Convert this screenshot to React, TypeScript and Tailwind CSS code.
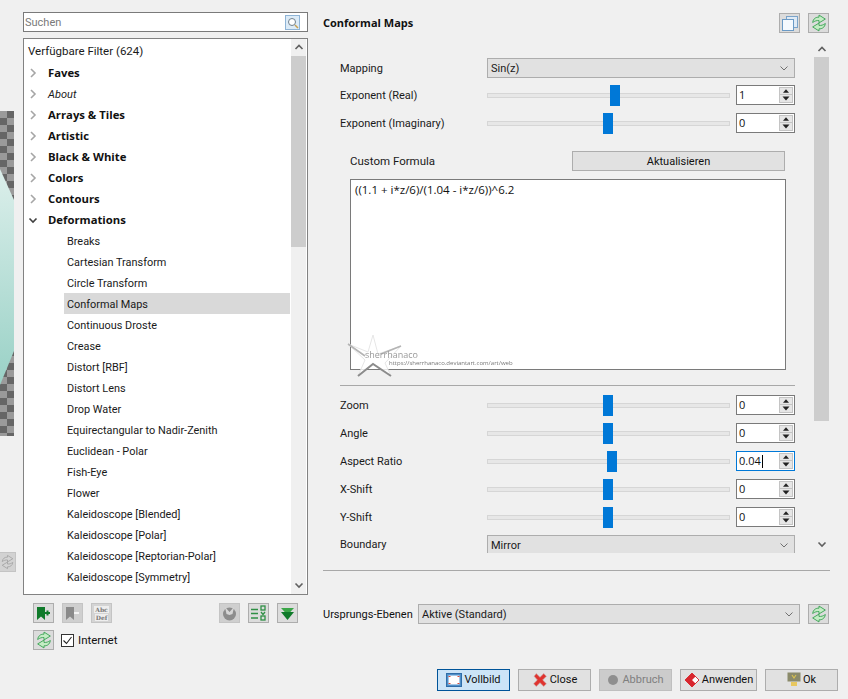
import React from "react";

function Refresh({ disabled = false }: { disabled?: boolean }) {
  const stroke = disabled ? "#a0a0a0" : "#3fa457";
  const fill = disabled ? "#d4d4d4" : "#c4ecc4";
  return (
    <svg width="18" height="18" viewBox="0 0 17 17">
      <path d="M2.5 8C3 4.4 5.6 2.8 8.5 3V1L14.5 4.8 8.5 8.4V6.2C6.3 6 4.6 6.6 2.5 8Z" fill={fill} stroke={stroke} strokeWidth="0.9" />
      <path d="M14.5 9C14 12.6 11.4 14.2 8.5 14V16L2.5 12.2 8.5 8.6V10.8C10.7 11 12.4 10.4 14.5 9Z" fill={fill} stroke={stroke} strokeWidth="0.9" />
    </svg>
  );
}

function IconBox({ children }: { children: React.ReactNode }) {
  return (
    <div className="flex h-[20px] w-[21px] shrink-0 items-center justify-center border border-[#adadad] bg-[#dcdcdc]">
      {children}
    </div>
  );
}

function Chev({ dir, color = "#606060", weight = 1.6 }: { dir: "up" | "down" | "right"; color?: string; weight?: number }) {
  const d = dir === "up" ? "M1.5 6L5 2.5 8.5 6" : dir === "down" ? "M1.5 3.5L5 7 8.5 3.5" : "M3 1L7 5 3 9";
  return (
    <svg width="10" height="10" viewBox="0 0 10 10">
      <path d={d} fill="none" stroke={color} strokeWidth={weight} />
    </svg>
  );
}

function Scrollbar({ thumbTop, thumbHeight }: { thumbTop: number; thumbHeight: number }) {
  return (
    <div className="relative h-full w-[15px] shrink-0 bg-[#f0f0f0]">
      <div className="absolute left-0 top-[1px] flex h-[16px] w-[15px] items-center justify-center">
        <Chev dir="up" />
      </div>
      <div className="absolute left-0 w-[15px] bg-[#cdcdcd]" style={{ top: thumbTop, height: thumbHeight }} />
      <div className="absolute bottom-[1px] left-0 flex h-[16px] w-[15px] items-center justify-center">
        <Chev dir="down" />
      </div>
    </div>
  );
}

const boldFont = { fontFamily: '"Open Sans", "Noto Sans", sans-serif' };

const categoriesTop: { t: string; italic?: boolean }[] = [
  { t: "Faves" },
  { t: "About", italic: true },
  { t: "Arrays & Tiles" },
  { t: "Artistic" },
  { t: "Black & White" },
  { t: "Colors" },
  { t: "Contours" },
];

const children = [
  "Breaks",
  "Cartesian Transform",
  "Circle Transform",
  "Conformal Maps",
  "Continuous Droste",
  "Crease",
  "Distort [RBF]",
  "Distort Lens",
  "Drop Water",
  "Equirectangular to Nadir-Zenith",
  "Euclidean - Polar",
  "Fish-Eye",
  "Flower",
  "Kaleidoscope [Blended]",
  "Kaleidoscope [Polar]",
  "Kaleidoscope [Reptorian-Polar]",
  "Kaleidoscope [Symmetry]",
  "Lens Correction",
];

function Tree() {
  return (
    <div className="mt-[6px] flex h-[557px] w-[285px] overflow-hidden border border-[#828282] bg-white pr-[1px]">
      <div className="min-w-0 flex-1">
        <div className="flex h-[23px] items-center pl-[4px] text-[11.5px] text-[#1a1a1a]">Verfügbare Filter (624)</div>
        {categoriesTop.map((c) => (
          <div key={c.t} className="flex h-[21px] items-center">
            <span className="flex w-[24px] justify-center pr-[6px]">
              <Chev dir="right" color="#a6a6a6" />
            </span>
            {c.italic ? (
              <span className="pt-[2px] italic text-[#1a1a1a]">{c.t}</span>
            ) : (
              <span className="text-[11.3px] font-bold text-[#111]" style={boldFont}>
                {c.t}
              </span>
            )}
          </div>
        ))}
        <div className="flex h-[21px] items-center">
          <span className="flex w-[24px] justify-center pr-[6px]">
            <Chev dir="down" color="#404040" />
          </span>
          <span className="text-[11.3px] font-bold text-[#111]" style={boldFont}>
            Deformations
          </span>
        </div>
        {children.map((c) => (
          <div
            key={c}
            className={
              c === "Conformal Maps"
                ? "ml-[40px] mr-[1px] flex h-[21px] items-center bg-[#d9d9d9] pl-[3px] pt-[2px] text-[10.9px] text-[#1a1a1a]"
                : "ml-[40px] mr-[1px] flex h-[21px] items-center pl-[3px] pt-[2px] text-[10.9px] text-[#1a1a1a]"
            }
          >
            {c}
          </div>
        ))}
      </div>
      <Scrollbar thumbTop={17} thumbHeight={191} />
    </div>
  );
}

function Select({ value }: { value: string }) {
  return (
    <div className="flex h-[20px] min-w-0 flex-1 items-center justify-between border border-[#adadad] bg-[#e1e1e1] pl-[3px] pr-[5px] text-[#1a1a1a]">
      <span className="pt-[1px]">{value}</span>
      <Chev dir="down" color="#707070" weight={1} />
    </div>
  );
}

function Spin({ value, focus = false }: { value: string; focus?: boolean }) {
  return (
    <div
      className={
        focus
          ? "flex h-[20px] w-[59px] shrink-0 items-center justify-between border border-[#0078d7] bg-white pl-[2px] pr-[1px]"
          : "flex h-[20px] w-[59px] shrink-0 items-center justify-between border border-[#7a7a7a] bg-white pl-[2px] pr-[1px]"
      }
    >
      <span className="flex items-center text-[#111]" style={boldFont}>
        {value}
        {focus && <span className="ml-[1px] inline-block h-[13px] w-px bg-black" />}
      </span>
      <div className="flex h-[16px] w-[14px] flex-col border border-[#c4c4c4] bg-[#e6e6e6]">
        <svg width="12" height="7" viewBox="0 0 12 7" className="border-b border-[#c4c4c4]">
          <path d="M2.5 5.5L6 1.5 9.5 5.5Z" fill="#222" />
        </svg>
        <svg width="12" height="7" viewBox="0 0 12 7">
          <path d="M2.5 1.5L6 5.5 9.5 1.5Z" fill="#222" />
        </svg>
      </div>
    </div>
  );
}

function SliderRow({ label, left, value, focus }: { label: string; left: number; value: string; focus?: boolean }) {
  return (
    <div className="flex h-[20px] items-center">
      <div className="w-[147px] shrink-0 pt-[1px] text-[#1a1a1a]">{label}</div>
      <div className="relative mr-[6px] h-[5px] w-[243px] shrink-0 border border-[#d6d6d6] bg-[#e7e7e7]">
        <div className="absolute top-[-9px] h-[21px] w-[10px] bg-[#0078d7]" style={{ left }} />
      </div>
      <Spin value={value} focus={focus} />
    </div>
  );
}

function Watermark() {
  return (
    <div className="absolute bottom-[-18px] left-[-4px] h-[52px] w-[160px]">
      <svg width="56" height="52" viewBox="0 0 56 52" className="absolute left-0 top-0">
        <path d="M26 0L31 19 54 11 38 28 44 41 26 29 11 41 18 25 1 9 21 17Z" fill="#ffffff" fillOpacity="0.8" stroke="#e6e6e6" strokeWidth="1" />
        <path d="M1 9L18 21" stroke="#b4b4b4" strokeWidth="1.6" />
        <path d="M34 19L54 11" stroke="#b4b4b4" strokeWidth="1.6" />
        <path d="M11 41L26 29 44 41" fill="none" stroke="#8c8c8c" strokeWidth="2" />
      </svg>
      <div className="absolute left-[18px] top-[15px] text-[9px] leading-[10px] text-[#999] blur-[0.5px]">sherrhanaco</div>
      <div className="absolute left-[42px] top-[24px] whitespace-nowrap text-[6px] leading-[8px] text-[#777] blur-[0.4px]">
        https://sherrhanaco.deviantart.com/art/web
      </div>
    </div>
  );
}

function ActionButton({
  label,
  icon,
  width,
  variant = "normal",
}: {
  label: string;
  icon: React.ReactNode;
  width: number;
  variant?: "normal" | "primary" | "disabled";
}) {
  const cls =
    variant === "primary"
      ? "flex h-[22px] items-center justify-center gap-[2px] border border-[#005499] bg-[#cce4f7] pb-[1px] text-[#111]"
      : variant === "disabled"
      ? "flex h-[22px] items-center justify-center gap-[3px] border border-[#bfbfbf] bg-[#cccccc] pb-[1px] text-[#7f7f7f]"
      : "flex h-[22px] items-center justify-center gap-[2px] border border-[#adadad] bg-[#e1e1e1] pb-[1px] text-[#111]";
  return (
    <div className={cls} style={{ width }}>
      {icon}
      <span>{label}</span>
    </div>
  );
}

export default function App() {
  return (
    <div
      className="flex h-[699px] w-[848px] overflow-hidden bg-[#f0f0f0] text-[11px] leading-[14px]"
      style={{ fontFamily: 'Roboto, "Open Sans", sans-serif' }}
    >
      {/* preview edge */}
      <div className="flex w-[23px] shrink-0 flex-col pt-[111px]">
        <svg width="14" height="325" viewBox="0 0 14 325">
          <defs>
            <pattern id="chk" width="14" height="14" patternUnits="userSpaceOnUse">
              <rect width="14" height="14" fill="#666666" />
              <rect width="7" height="7" fill="#9a9a9a" />
              <rect x="7" y="7" width="7" height="7" fill="#9a9a9a" />
            </pattern>
            <linearGradient id="teal" x1="0" y1="0" x2="0" y2="1">
              <stop offset="0" stopColor="#dcefeb" />
              <stop offset="1" stopColor="#99d1c6" />
            </linearGradient>
          </defs>
          <rect width="14" height="325" fill="url(#chk)" />
          <path d="M0 58L14 89V240L0 274Z" fill="url(#teal)" />
        </svg>
        <div className="mt-[116px] flex h-[20px] w-[16px] items-center justify-center border border-[#c4c4c4] border-l-0 bg-[#d2d2d2]">
          <Refresh disabled />
        </div>
      </div>

      {/* left column */}
      <div className="w-[285px] shrink-0 pt-[12px]">
        <div className="flex h-[20px] items-center justify-between border border-[#7a7a7a] bg-white pl-[1px] pr-[7px] text-[#7a7a7a]">
          <span className="pt-[2px]">Suchen</span>
          <svg width="15" height="15" viewBox="0 0 15 15">
            <rect x="0.5" y="0.5" width="14" height="14" fill="#dcebf7" stroke="#8fb4d6" />
            <circle cx="7" cy="7" r="3.5" fill="#fff" stroke="#6f7f8c" />
            <path d="M10 10L13 13" stroke="#c8a050" strokeWidth="1.5" />
          </svg>
        </div>
        <Tree />
        <div className="mt-[8px] flex justify-between pl-[10px] pr-[10px]">
          <div className="flex gap-[8px]">
            <IconBox>
              <svg width="15" height="15" viewBox="0 0 15 15">
                <path d="M1 1H9V14L5 10.5 1 14Z" fill="#0f7a2a" />
                <path d="M9 7H14M11.5 4.5V9.5" stroke="#0f7a2a" strokeWidth="2" />
              </svg>
            </IconBox>
            <div className="flex h-[20px] w-[21px] items-center justify-center border border-[#c4c4c4] bg-[#cfcfcf]">
              <svg width="15" height="15" viewBox="0 0 15 15">
                <path d="M1 1H9V14L5 10.5 1 14Z" fill="#8a8a8a" />
                <path d="M9 7H14" stroke="#f4f4f4" strokeWidth="2" />
              </svg>
            </div>
            <div className="flex h-[20px] w-[21px] items-center justify-center border border-[#c4c4c4] bg-[#d4d4d4]">
              <div className="flex flex-col items-center gap-[1px] text-[6px] font-bold leading-[7px] text-[#777]" style={{ fontFamily: '"DejaVu Serif", serif' }}>
                <span className="bg-[#eeeeee] px-[1px]">Abc</span>
                <span className="bg-[#eeeeee] px-[1px]">Def</span>
              </div>
            </div>
          </div>
          <div className="flex gap-[8px]">
            <div className="flex h-[20px] w-[21px] items-center justify-center border border-[#c4c4c4] bg-[#cfcfcf]">
              <svg width="15" height="15" viewBox="0 0 15 15">
                <circle cx="7.5" cy="8" r="6.5" fill="#8d8d8d" />
                <path d="M3 1L7.5 6 12 1 10.5 8 7.5 9 4.5 8Z" fill="#d6d6d6" />
              </svg>
            </div>
            <IconBox>
              <svg width="17" height="16" viewBox="0 0 17 16" fill="none" stroke="#2f8f45" strokeWidth="1.3">
                <path d="M1 4.5H8M1 8.5H8M1 13H8" />
                <rect x="11" y="1" width="4" height="4" />
                <rect x="11" y="11" width="4" height="4" />
                <path d="M11 7L13 9.5 15 7" />
              </svg>
            </IconBox>
            <IconBox>
              <svg width="15" height="15" viewBox="0 0 15 15">
                <path d="M1 2H14L7.5 9Z" fill="#3aa648" />
                <path d="M1 6H14L7.5 14Z" fill="#0f7a2a" />
              </svg>
            </IconBox>
          </div>
        </div>
        <div className="mt-[7px] flex items-center pl-[10px]">
          <IconBox>
            <Refresh />
          </IconBox>
          <div className="ml-[7px] flex h-[13px] w-[13px] items-center justify-center border border-[#333] bg-white">
            <svg width="11" height="11" viewBox="0 0 11 11">
              <path d="M1.5 5.5L4.5 8.5 9.5 2" fill="none" stroke="#222" strokeWidth="1.1" />
            </svg>
          </div>
          <span className="ml-[4px] text-[11.5px] text-[#111]">Internet</span>
        </div>
      </div>

      {/* right column */}
      <div className="ml-[15px] flex w-[515px] shrink-0 flex-col pt-[13px]">
        <div className="flex h-[20px] w-[506px] items-center justify-between">
          <span className="text-[11px] font-bold text-[#111]" style={boldFont}>
            Conformal Maps
          </span>
          <div className="flex gap-[8px]">
            <IconBox>
              <svg width="16" height="16" viewBox="0 0 16 16">
                <rect x="4.5" y="1.5" width="11" height="11" fill="#dfeaf5" stroke="#7aa3c9" />
                <rect x="0.5" y="4.5" width="11" height="11" fill="#f4f9fe" stroke="#6a9ac6" />
              </svg>
            </IconBox>
            <IconBox>
              <Refresh />
            </IconBox>
          </div>
        </div>

        <div className="mt-[8px] flex h-[512px] w-[506px]">
          <div className="min-w-0 flex-1 overflow-hidden pl-[17px] pr-[19px] pt-[17px]">
            <div className="flex h-[20px] items-center">
              <div className="w-[147px] shrink-0 pt-[1px] text-[#1a1a1a]">Mapping</div>
              <Select value="Sin(z)" />
            </div>
            <div className="mt-[7px] flex flex-col gap-[8px]">
              <SliderRow label="Exponent (Real)" left={122} value="1" />
              <SliderRow label="Exponent (Imaginary)" left={115} value="0" />
            </div>
            <div className="ml-[10px] mt-[18px] w-[436px]">
              <div className="flex h-[20px] items-center justify-between">
                <span className="text-[11.5px] text-[#1a1a1a]">Custom Formula</span>
                <div className="mr-[1px] flex h-[20px] w-[213px] items-center justify-center border border-[#adadad] bg-[#e1e1e1] pt-[1px] text-[#111]">
                  Aktualisieren
                </div>
              </div>
              <div className="relative mt-[8px] h-[191px] border border-[#7a7a7a] bg-white pl-[4px] pt-[3px] text-[11.5px] text-[#111]" style={boldFont}>
                ((1.1 + i*z/6)/(1.04 - i*z/6))^6.2
                <Watermark />
              </div>
            </div>
            <div className="mt-[15px] h-px bg-[#a8a8a8]" />
            <div className="mt-[9px] flex flex-col gap-[8px]">
              <SliderRow label="Zoom" left={115} value="0" />
              <SliderRow label="Angle" left={115} value="0" />
              <SliderRow label="Aspect Ratio" left={119} value="0.04" focus />
              <SliderRow label="X-Shift" left={115} value="0" />
              <SliderRow label="Y-Shift" left={115} value="0" />
              <div className="flex h-[20px] items-center">
                <div className="w-[147px] shrink-0 text-[#1a1a1a]">Boundary</div>
                <Select value="Mirror" />
              </div>
            </div>
          </div>
          <Scrollbar thumbTop={16} thumbHeight={364} />
        </div>

        <div className="mt-[17px] h-px w-[507px] bg-[#a8a8a8]" />

        <div className="mt-[33px] flex h-[20px] w-[506px] items-center">
          <span className="w-[95px] shrink-0 whitespace-nowrap pt-[1px] text-[#111]">Ursprungs-Ebenen</span>
          <Select value="Aktive (Standard)" />
          <div className="ml-[8px]">
            <IconBox>
              <Refresh />
            </IconBox>
          </div>
        </div>

        <div className="mt-[45px] flex w-[515px] justify-end gap-[8px]">
          <ActionButton
            variant="primary"
            width={73}
            label="Vollbild"
            icon={
              <svg width="16" height="14" viewBox="0 0 16 14">
                <rect x="0.5" y="0.5" width="15" height="13" fill="#4f8fc8" stroke="#2f6da8" />
                <rect x="2.5" y="2.5" width="11" height="9" fill="#fff" />
                <path d="M2.5 3.5H4.5M2.5 10.5H4.5M11.5 3.5H13.5M11.5 10.5H13.5" stroke="#d94a3a" strokeWidth="1.2" />
              </svg>
            }
          />
          <ActionButton
            width={73}
            label="Close"
            icon={
              <svg width="16" height="16" viewBox="0 0 15 15">
                <path d="M2 4L4 1.5 7.5 5 11 1.5 13.5 4 10 7.5 13.5 11 11 13.5 7.5 10 4 13.5 1.5 11 5 7.5Z" fill="#e0332e" stroke="#c9a8a8" strokeWidth="0.6" />
              </svg>
            }
          />
          <ActionButton
            variant="disabled"
            width={73}
            label="Abbruch"
            icon={
              <svg width="12" height="12" viewBox="0 0 12 12">
                <circle cx="6" cy="6" r="5" fill="#8f8f8f" />
              </svg>
            }
          />
          <ActionButton
            width={77}
            label="Anwenden"
            icon={
              <svg width="16" height="16" viewBox="0 0 16 16">
                <path d="M8 1L15 8 8 15 1 8Z" fill="#fff" stroke="#d8363a" />
                <path d="M8 1L11.5 4.5 8 8 4.5 4.5ZM8 8L11.5 11.5 8 15 4.5 11.5ZM1 8L4.5 4.5 8 8 4.5 11.5Z" fill="#d8262e" />
              </svg>
            }
          />
          <ActionButton
            width={73}
            label="Ok"
            icon={
              <svg width="14" height="15" viewBox="0 0 14 15">
                <rect x="0.5" y="0.5" width="13" height="9" fill="#8a8a6a" />
                <path d="M5 3L7 6 9 3" stroke="#d8c050" strokeWidth="1.2" fill="none" />
                <rect x="4" y="10" width="6" height="4" fill="#e8c860" />
              </svg>
            }
          />
        </div>
      </div>
    </div>
  );
}
